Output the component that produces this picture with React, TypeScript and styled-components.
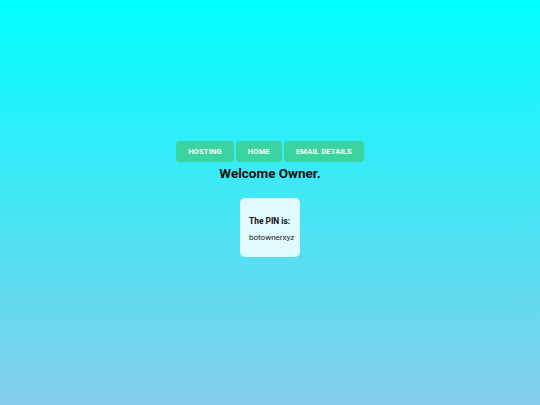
import React, { FC } from "react";
import styled, { createGlobalStyle } from "styled-components";

const GlobalStyle = createGlobalStyle`
  html, body {
    margin: 0;
    padding: 0;
    height: 100%;
  }
  body {
    font-family: Roboto, "Liberation Sans", sans-serif;
    background: linear-gradient(180deg, #00ffff 0%, #87ceeb 100%);
    background-attachment: fixed;
  }
`;

const Page = styled.div`
  min-height: 100vh;
  display: flex;
  flex-direction: column;
  align-items: center;
  justify-content: center;
  padding-bottom: 8px;
  box-sizing: border-box;
`;

const Nav = styled.nav`
  display: flex;
  gap: 2px;
`;

const NavButton = styled.button`
  height: 21px;
  padding: 0 12px;
  border: none;
  border-radius: 4px;
  background: #3ad49e;
  color: #ffffff;
  font-family: Roboto, "Liberation Sans", sans-serif;
  font-size: 7.5px;
  font-weight: 700;
  letter-spacing: 0.2px;
  text-transform: uppercase;
  cursor: pointer;
`;

const Title = styled.h1`
  margin: 3px 0 0;
  font-size: 13.5px;
  font-weight: 700;
  color: #111111;
`;

const Card = styled.div`
  margin-top: 17px;
  width: 60px;
  height: 59px;
  box-sizing: border-box;
  padding: 3px 0 0 9px;
  background: #e0faff;
  border-radius: 5px;
  display: flex;
  flex-direction: column;
  justify-content: center;
`;

const Label = styled.div`
  font-size: 8.4px;
  font-weight: 700;
  color: #111111;
`;

const Pin = styled.div`
  margin-top: 7px;
  font-size: 8px;
  font-weight: 400;
  color: #222222;
`;

const App: FC = () => {
  return (
    <>
      <GlobalStyle />
      <Page>
        <Nav>
          <NavButton>Hosting</NavButton>
          <NavButton>Home</NavButton>
          <NavButton>Email Details</NavButton>
        </Nav>
        <Title>Welcome Owner.</Title>
        <Card>
          <Label>The PIN is:</Label>
          <Pin>botownerxyz</Pin>
        </Card>
      </Page>
    </>
  );
};

export default App;
